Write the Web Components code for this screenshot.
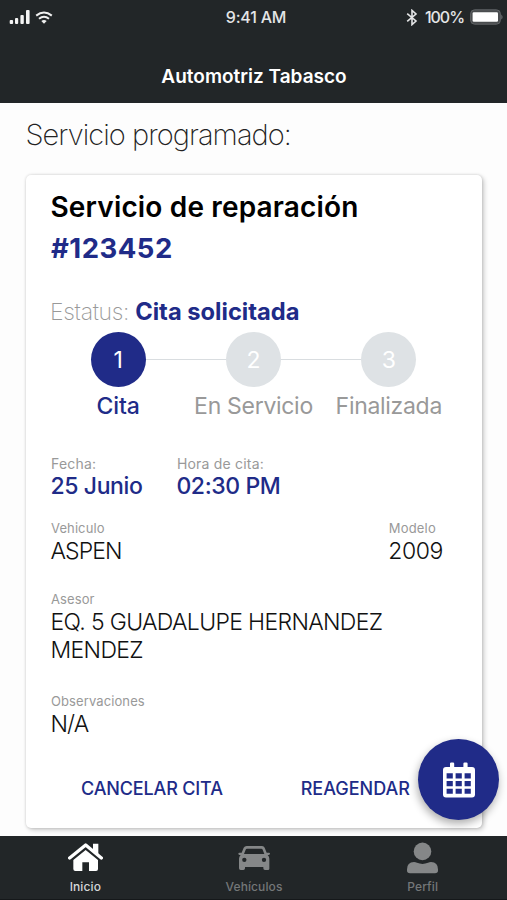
<!DOCTYPE html>
<html lang="es">
<head>
<meta charset="utf-8">
<title>Automotriz Tabasco</title>
<style>
html,body{margin:0;height:100%}
body{font-family:Inter,"Liberation Sans",sans-serif;background:#fdfdfd;color:#111;
--navy:#202b88;--bar:#222628;--muted:#999;overflow:hidden}
</style>
</head>
<body>
<service-app></service-app>
<script>
const define=(name,html,init)=>customElements.define(name,class extends HTMLElement{
  connectedCallback(){
    const t=document.createElement('template');
    t.innerHTML=html;
    this.attachShadow({mode:'open'}).append(t.content.cloneNode(true));
    if(init)init(this,this.shadowRoot);
  }
});

define('status-bar',`<style>
:host{display:grid;grid-template-columns:1fr auto 1fr;align-items:center;height:34px;padding:0 3px 0 9px;color:#e4e5e6;font-size:16px;font-weight:500;line-height:34px}
.l,.r{display:flex;align-items:center}.r{justify-content:flex-end}
.time{letter-spacing:-.2px;margin-left:-1px}.pct{letter-spacing:-1.05px;margin:0 6px 0 7px}
svg{display:block}
.wifi{margin-left:5px}
</style>
<div class="l">
<svg width="21" height="14" viewBox="0 0 21 14" fill="#f4f4f4"><rect x=".7" y="10" width="3.4" height="4" rx="1"/><rect x="6" y="8" width="3.2" height="6" rx="1"/><rect x="11.4" y="5" width="3.4" height="9" rx="1"/><rect x="17" y="0" width="3.6" height="14" rx="1"/></svg>
<svg class="wifi" width="18" height="13" viewBox="0 0 18 13" fill="none" stroke="#f0f0f0" stroke-width="2"><path d="M1.2 4.6Q9-1.6 16.8 4.6"/><path d="M4 7.8Q9 3.8 14 7.8"/><path d="M6.3 10Q9 7.8 11.7 10L9 12.8Z" fill="#f0f0f0" stroke="none"/></svg>
</div>
<span class="time">9:41 AM</span>
<div class="r">
<svg width="12" height="17" viewBox="0 0 12 17" fill="none" stroke="#e4e5e6" stroke-width="1.6"><path d="M1.2 4.6L10 12L6 15.6V1.4L10 5L1.2 12.4"/></svg>
<span class="pct">100%</span>
<svg width="34" height="16" viewBox="0 0 34 16"><rect x=".6" y=".8" width="29.8" height="14.4" rx="4" fill="#4a4d4f" stroke="#606365" stroke-width="1"/><rect x="2.600" y="3.2" width="25.400" height="9.6" rx="1.2" fill="#fff"/><path d="M31.4 5.4Q33.600 8 31.4 10.6Z" fill="#77797b"/></svg>
</div>`);

define('app-header',`<style>
:host{display:flex;flex-direction:column;background:var(--bar);height:103px;flex:none}
h1{margin:23px 0 0 1px;font-size:19px;font-weight:600;line-height:40px;color:#fff;text-align:center;letter-spacing:0}
</style><status-bar></status-bar><h1><slot></slot></h1>`);

define('step-item',`<style>
:host{display:flex;flex-direction:column;align-items:center;--c:#dee2e5;--t:var(--muted)}
:host([active]){--c:var(--navy);--t:var(--navy)}
.row{display:flex;align-items:center;align-self:stretch}
.row::before,.row::after{content:"";flex:1;height:1px;background:#d9dde0}
:host(:first-child) .row::before,:host(:last-child) .row::after{visibility:hidden}
.dot{width:55px;height:55px;border-radius:50%;background:var(--c);color:#fff;display:grid;place-items:center;font-size:23px;line-height:56px}
.label{font-size:23px;line-height:30px;margin-top:4px;color:var(--t);white-space:nowrap;letter-spacing:-.3px}
:host([active]) .label{font-weight:500;letter-spacing:-.1px}
</style><div class="row"><span class="dot"></span></div><span class="label"><slot></slot></span>`,
(h,r)=>{r.querySelector('.dot').textContent=h.getAttribute('n')});

define('step-list',`<style>:host{display:grid;grid-template-columns:repeat(3,1fr)}</style><slot></slot>`);

define('info-field',`<style>
:host{display:block}
.k{font-size:var(--ks,13px);letter-spacing:var(--kl,.1px);line-height:17px;color:var(--muted)}
.v{font-size:23px;line-height:28px;color:#111;font-weight:350;letter-spacing:var(--vl,-.9px);white-space:nowrap;margin-left:-.5px}
:host([accent]){--ks:14px;--kl:.2px}
:host([accent]) .v{color:var(--navy);font-weight:480}
</style><div class="k"></div><div class="v"><slot></slot></div>`,
(h,r)=>{r.querySelector('.k').textContent=h.getAttribute('label')});

define('text-button',`<style>
:host{display:block}
button{all:unset;display:block;font-size:18px;line-height:30px;font-weight:450;color:var(--navy);white-space:nowrap}
</style><button><slot></slot></button>`);

define('service-card',`<style>
:host{display:flex;flex-direction:column;box-sizing:border-box;width:456px;height:653px;margin:23px 0 0 26px;padding:12px 25px 0;background:#fff;border-radius:5px;box-shadow:2px 2px 5px rgba(0,0,0,.2),0 0 3px rgba(0,0,0,.16)}
h2{margin:0 0 0 -.5px;font-size:28px;line-height:40px;font-weight:600;color:#000;letter-spacing:.16px;white-space:nowrap}
.id{font-size:27.5px;line-height:42px;font-weight:680;color:var(--navy);letter-spacing:.5px}
.status{display:flex;align-items:baseline;margin-top:28px;line-height:30px}
.status span{font-size:23px;font-weight:200;color:#999;letter-spacing:-.3px;margin-left:-1px}
.status b{font-size:23.7px;font-weight:680;color:var(--navy);margin-left:6px}
step-list{margin-top:4.5px;margin-left:-.5px;margin-right:.5px}
.row{display:flex}
.dates{margin-top:34px;gap:34.5px}.car{margin-top:20px;justify-content:space-between;padding-right:14px}
.one{margin-top:26px}.obs{margin-top:29px}
.actions{margin-top:36px;justify-content:space-between;padding:0 47px 0 30px}
</style>
<h2>Servicio de reparación</h2>
<div class="id">#123452</div>
<div class="status"><span>Estatus:</span><b>Cita solicitada</b></div>
<step-list><step-item n="1" active>Cita</step-item><step-item n="2">En Servicio</step-item><step-item n="3">Finalizada</step-item></step-list>
<div class="row dates"><info-field accent label="Fecha:" style="--vl:-.4px">25 Junio</info-field><info-field accent label="Hora de cita:" style="--vl:-.4px">02:30 PM</info-field></div>
<div class="row car"><info-field label="Vehiculo">ASPEN</info-field><info-field label="Modelo" style="--vl:-.4px;--kl:.2px">2009</info-field></div>
<info-field class="one" label="Asesor" style="--vl:-.66px">EQ. 5 GUADALUPE HERNANDEZ<br>MENDEZ</info-field>
<info-field class="obs" label="Observaciones">N/A</info-field>
<div class="row actions"><text-button style="letter-spacing:-.15px">CANCELAR CITA</text-button><text-button>REAGENDAR</text-button></div>`);

define('calendar-fab',`<style>
:host{position:absolute;left:418px;top:739px;width:81px;height:81px;border-radius:50%;background:var(--navy);display:grid;place-items:center;box-shadow:-1px 4px 9px rgba(0,0,0,.32)}
svg{display:block}
</style><svg width="32" height="36" viewBox="0 0 32 36"><path fill="#fff" fill-rule="evenodd" d="M3 5H7V1.6Q7 .4 8.2 .4H10Q11.2 .4 11.2 1.6V5H20.4V1.6Q20.4 .4 21.6 .4H23.4Q24.6 .4 24.6 1.6V5H29Q32 5 32 8V32.5Q32 35.5 29 35.5H3Q0 35.5 0 32.5V8Q0 5 3 5ZM3.6 11.2V16.4H9.8V11.2ZM12.6 11.2V16.4H18.8V11.2ZM21.6 11.2V16.4H27.8V11.2ZM3.6 19V24.2H9.8V19ZM12.6 19V24.2H18.8V19ZM21.6 19V24.2H27.8V19ZM3.6 26.8V31.8H9.8V26.8ZM12.6 26.8V31.8H18.8V26.8ZM21.6 26.8V31.8H27.8V26.8Z"/></svg>`);

define('tab-item',`<style>
:host{flex:1;display:flex;flex-direction:column;align-items:center;color:#747778;font-size:12px;font-weight:500}
:host([active]){color:#fff}
.icon{height:42px;display:flex;align-items:center;padding-top:1px;box-sizing:border-box}
.t{line-height:17px;letter-spacing:.1px}
:host([active]) .t{color:#d5d7d8}
</style><div class="icon"><slot name="icon"></slot></div><span class="t"><slot></slot></span>`);

define('tab-bar',`<style>
:host{display:flex;box-sizing:border-box;height:64px;padding:0 0 0 1px;background:var(--bar);margin-top:auto;border-bottom:1px solid #15181a}
svg{display:block}
</style>
<tab-item active><svg slot="icon" width="35" height="29" viewBox="172 312 105 87" fill="#fff"><path d="M177 357L225 318L272 357" fill="none" stroke="#fff" stroke-width="10" stroke-linecap="round" stroke-linejoin="round"/><path d="M247 314H263V347L247 334Z"/><path d="M188 363L225 333L262 363V390Q262 396 256 396H235V370H215V396H194Q188 396 188 390Z"/></svg>Inicio</tab-item>
<tab-item><svg slot="icon" width="32" height="26" viewBox="24 23 96 78" fill="#858788"><path fill-rule="evenodd" d="M50 26H96Q102 26 104 31L110 46H117Q120 46 120 49T116 53H113Q118 58 118 64V94Q118 98 114 98H105Q100 98 100 93V89H45V93Q45 98 40 98H32Q27 98 27 93V64Q27 58 32 53H28Q25 52 25 49T28 46H35L41 31Q44 26 50 26ZM51 34Q48 34 47 37L42 50H103L98 37Q97 34 94 34ZM43 61A6.500 6.500 0 1 0 43 74A6.500 6.500 0 1 0 43 61ZM102 61A6.500 6.500 0 1 0 102 74A6.500 6.500 0 1 0 102 61Z"/></svg>Vehículos</tab-item>
<tab-item><svg slot="icon" width="31" height="32" viewBox="0 0 31 32" fill="#858788"><circle cx="15.500" cy="9.400" r="8.800"/><path d="M0 27.500Q0 20 7 20Q8.500 20 10 20.800Q15.500 23 21 20.800Q22.500 20 24 20Q31 20 31 27.500V28.500Q31 31.300 28 31.300H3Q0 31.300 0 28.500Z"/></svg>Perfil</tab-item>`);

define('service-app',`<style>
:host{display:flex;flex-direction:column;width:507px;height:900px;position:relative}
h3{margin:16px 0 1px 25.5px;font-size:29px;line-height:32px;font-weight:250;letter-spacing:-.95px;color:#222;white-space:nowrap}
</style>
<app-header>Automotriz Tabasco</app-header>
<h3>Servicio programado:</h3>
<service-card></service-card>
<calendar-fab></calendar-fab>
<tab-bar></tab-bar>`);
</script>
</body>
</html>
